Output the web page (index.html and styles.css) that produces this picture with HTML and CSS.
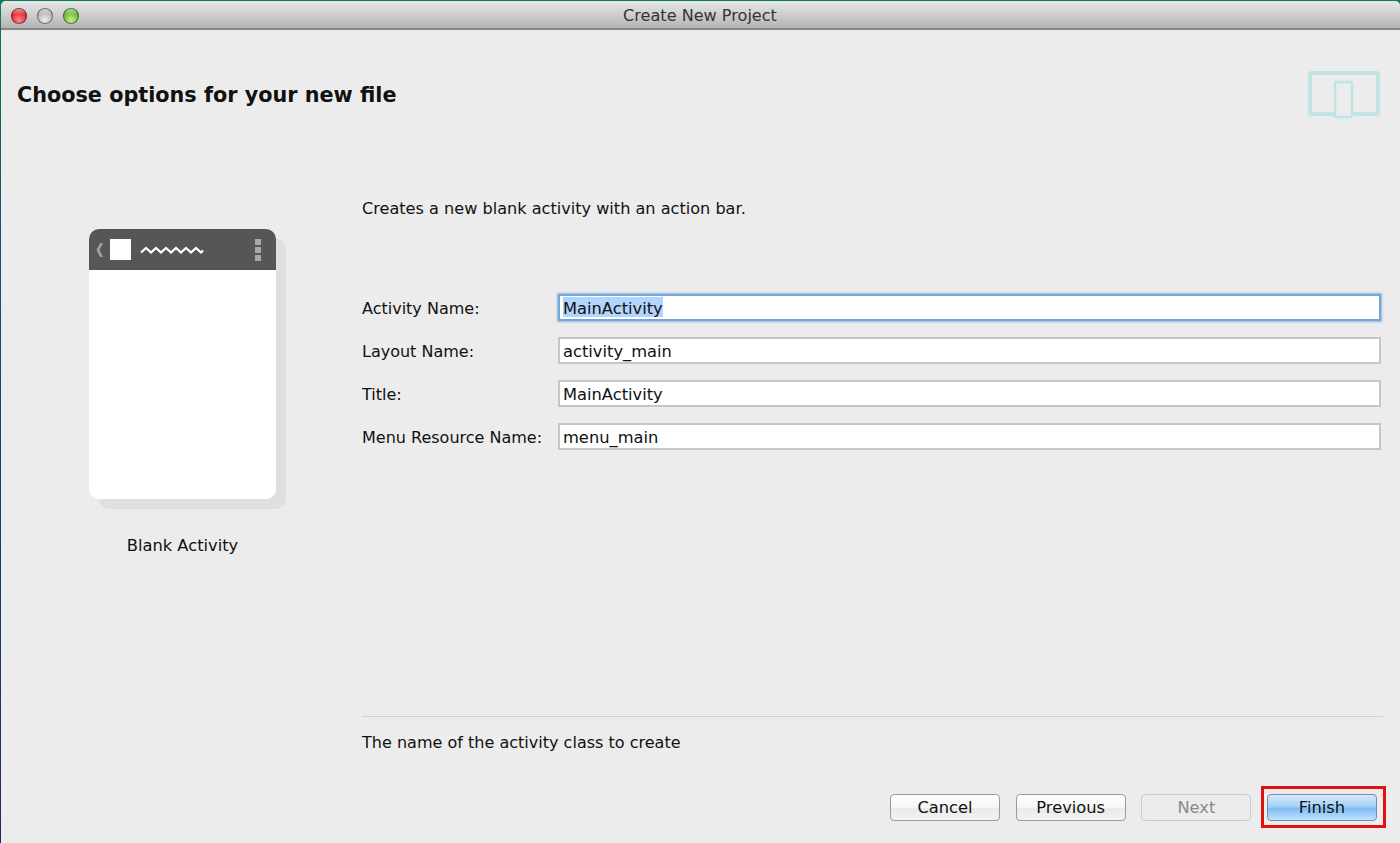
FILE: index.html
```html
<!DOCTYPE html>
<html lang="en">
<head>
<meta charset="utf-8">
<title>Create New Project</title>
<link rel="stylesheet" href="styles.css">
</head>
<body>
<div class="window">
  <div class="titlebar">
    <div class="lights">
      <span class="light red"></span>
      <span class="light gray"></span>
      <span class="light green"></span>
    </div>
    <div class="window-title">Create New Project</div>
  </div>
  <div class="header">
    <h1 class="heading">Choose options for your new file</h1>
    <svg class="device-icon" width="72" height="48" viewBox="0 0 72 48">
      <rect x="2" y="2" width="68" height="41" rx="1.5" fill="none" stroke="#c0e4e4" stroke-width="4"/>
      <rect x="27" y="11" width="17" height="35" rx="1.5" fill="#ececec" stroke="#c0e4e4" stroke-width="2.5"/>
    </svg>
  </div>
  <div class="main">
    <div class="left">
      <div class="preview">
        <div class="preview-shadow"></div>
        <div class="phone">
          <div class="actionbar">
            <svg class="back" width="8" height="14" viewBox="0 0 8 14"><path d="M7 0 3.500 7 7 14H4L.5 7 4 0z" fill="#a0a0a0"/></svg>
            <span class="app-icon"></span>
            <svg class="squiggle" width="64" height="10" viewBox="0 0 64 10"><path d="M1 7.500 6 3l5 4.500L16 3l5 4.500L26 3l5 4.500L36 3l5 4.500L46 3l5 4.500L56 3l5 4.500 2-2" fill="none" stroke="#fff" stroke-width="2.300"/></svg>
            <span class="overflow"><i></i><i></i><i></i></span>
          </div>
        </div>
      </div>
      <div class="preview-label">Blank Activity</div>
    </div>
    <div class="right">
      <p class="desc">Creates a new blank activity with an action bar.</p>
      <div class="form">
        <label class="label">Activity Name:</label>
        <div class="input focused"><span class="selected">MainActivity</span></div>
        <label class="label">Layout Name:</label>
        <div class="input">activity_main</div>
        <label class="label">Title:</label>
        <div class="input">MainActivity</div>
        <label class="label">Menu Resource Name:</label>
        <div class="input">menu_main</div>
      </div>
      <div class="hint">The name of the activity class to create</div>
    </div>
  </div>
  <div class="footer">
    <button class="btn">Cancel</button>
    <button class="btn">Previous</button>
    <button class="btn disabled">Next</button>
    <span class="highlight"><button class="btn primary">Finish</button></span>
  </div>
</div>
</body>
</html>
```
FILE: styles.css
```css
* { box-sizing: border-box; }
html, body { margin: 0; height: 100%; }
body {
  padding: 1px 0 0 1px;
  overflow: hidden;
  background: linear-gradient(180deg, #0a7a5c 0%, #14506e 30%, #1c2a66 100%);
  font-family: "DejaVu Sans", sans-serif;
  font-size: 16px;
  color: #111;
}
.window {
  height: 100%;
  display: flex;
  flex-direction: column;
  background: #ececec;
  border-radius: 5px 5px 0 0;
  overflow: hidden;
}
.titlebar {
  flex: none;
  height: 29px;
  display: flex;
  align-items: center;
  position: relative;
  background: linear-gradient(180deg, #e6e6e6 0%, #d6d6d6 35%, #b4b4b4 100%);
  border-bottom: 2px solid #858585;
}
.lights { display: flex; gap: 10px; padding-left: 10px; padding-top: 3px; }
.light { width: 16px; height: 16px; border-radius: 50%; border: 1px solid rgba(0,0,0,.45); }
.red { background: linear-gradient(180deg, rgba(255,255,255,.55) 0%, rgba(255,255,255,0) 40%), radial-gradient(circle at 50% 80%, #ff8a8a 0%, #e8333a 55%, #b8161e 100%); }
.gray { background: linear-gradient(180deg, rgba(255,255,255,.55) 0%, rgba(255,255,255,0) 40%), radial-gradient(circle at 50% 80%, #ececec 0%, #b9b9b9 60%, #8f8f8f 100%); }
.green { background: linear-gradient(180deg, rgba(255,255,255,.55) 0%, rgba(255,255,255,0) 40%), radial-gradient(circle at 50% 80%, #c8f08c 0%, #74c03c 55%, #3f8e1e 100%); }
.window-title {
  position: absolute;
  left: 0;
  right: 0;
  top: 5px;
  padding-right: 1px;
  text-align: center;
  font-size: 16.1px;
  color: #333;
}
.header {
  flex: none;
  height: 142px;
  display: flex;
  justify-content: space-between;
  align-items: flex-start;
  padding: 41px 20px 0 16px;
}
.heading { margin: 9px 0 0; font-size: 20.75px; line-height: 30px; font-weight: 700; color: #111; }
.device-icon { display: block; }
.main { flex: 1; display: flex; min-height: 0; }
.left { flex: none; width: 361px; padding: 57px 0 0 88px; }
.preview { position: relative; width: 197px; height: 280px; }
.preview-shadow {
  position: absolute;
  left: 10px;
  top: 10px;
  width: 187px;
  height: 270px;
  border-radius: 10px;
  background: #dfdfdf;
}
.phone {
  position: relative;
  width: 187px;
  height: 270px;
  border-radius: 10px;
  background: #fff;
  overflow: hidden;
}
.actionbar {
  height: 41px;
  background: #565656;
  display: flex;
  align-items: center;
  padding: 0 15px 0 7px;
}
.back { flex: none; }
.app-icon { flex: none; width: 21px; height: 21px; margin-left: 6px; background: #fff; }
.squiggle { flex: none; margin-left: 9px; }
.overflow { margin-left: auto; display: flex; flex-direction: column; gap: 2px; }
.overflow i { display: block; width: 6px; height: 6px; background: #a9a9a9; }
.preview-label { width: 187px; margin-top: 27px; text-align: center; line-height: 20px; font-size: 16.3px; }
.right { flex: 1; min-width: 0; padding-right: 19px; display: flex; flex-direction: column; }
.desc { margin: 27px 0 0; line-height: 20px; font-size: 16.12px; }
.form {
  margin-top: 75px;
  display: grid;
  grid-template-columns: 196px 1fr;
  grid-auto-rows: 27px;
  row-gap: 16px;
  align-items: center;
}
.label { padding-top: 2px; }
.input {
  height: 27px;
  padding: 0 3px;
  background: #fff;
  border: 2px solid #c6c6c6;
  line-height: 25px;
  font-size: 16.3px;
  color: #111;
}
.focused {
  border-color: #73a6d6;
  box-shadow: 0 0 2px 1px rgba(115,166,214,.7);
}
.selected { display: inline-block; height: 20px; line-height: 23px; margin-top: 1px; vertical-align: top; background: #b3d4fc; }
.hint {
  margin-top: auto;
  margin-right: -2px;
  border-top: 1px solid #cfcfcf;
  height: 70px;
  padding-top: 16px;
  line-height: 20px;
  font-size: 16.05px;
}
.footer {
  flex: none;
  height: 57px;
  display: flex;
  justify-content: flex-end;
  align-items: flex-start;
  gap: 15.67px;
  padding: 8px 23px 0 0;
}
.btn {
  width: 110px;
  height: 27px;
  padding: 0;
  font: inherit;
  font-size: 16.3px;
  color: #111;
  border: 1px solid #9a9a9a;
  border-radius: 4px;
  background: linear-gradient(180deg, #ffffff 0%, #f6f6f6 50%, #e9e9e9 55%, #f4f4f4 100%);
}
.disabled { color: #8a8a8a; border-color: #cdcdcd; background: #ececec; }
.primary {
  display: block;
  border-color: #7b8aa0;
  background: linear-gradient(180deg, #d4e8fb 0%, #a6d2f8 45%, #7fbcf5 55%, #bfe4ff 100%);
}
.highlight { position: relative; display: block; }
.highlight::after {
  content: "";
  position: absolute;
  left: -6px;
  top: -8px;
  right: -9px;
  bottom: -7px;
  border: 3px solid #e0120f;
}
```
